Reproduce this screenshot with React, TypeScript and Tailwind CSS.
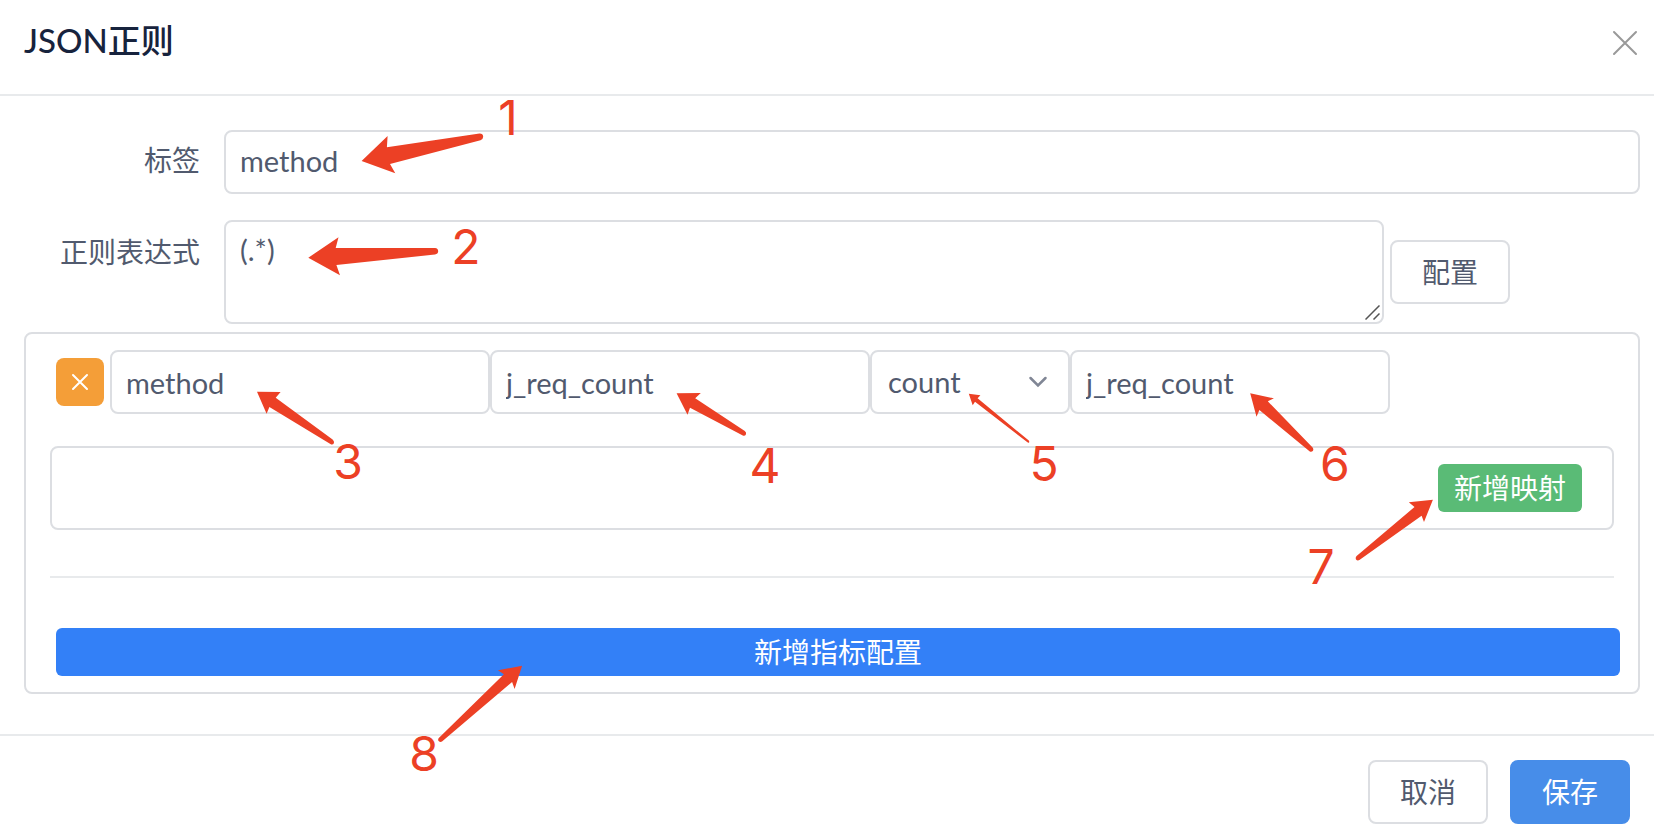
import type { InputHTMLAttributes } from "react";

const field =
  "h-16 w-full min-w-0 rounded-lg border-2 border-[#dcdee2] bg-white px-3.5 text-[29px] text-[#515a6e] outline-none";

const plainButton =
  "flex h-16 w-30 shrink-0 items-center justify-center rounded-lg border-2";

function TextField({ className = "", ...rest }: InputHTMLAttributes<HTMLInputElement>) {
  return <input type="text" className={`${field} ${className}`} {...rest} />;
}

const arrows = [
  "M361.6 161L387.6 136L386.9 147.3L479.5 133.4Q483 133.3 483.2 136.7Q483 139.6 480.5 140.2L390 164L395.3 173.3Z",
  "M308.3 257.7L338.5 237.3L335.7 248L435 248Q438.2 248.3 438.2 251.3Q438 254.2 435 254.4L336.4 265L340 275.3Z",
  "M257 391.7L280.6 392L275.7 397.7L332.6 439.6Q334.4 441.4 334 443Q333 445 331.2 444.5L269.4 407L266.6 413.7Z",
  "M676.6 393.3L700.8 393L695.2 398.3L744.8 431Q746.6 432.6 746 434.3Q745 436.4 742.8 435.6L690 407.7L687.5 414.7Z",
  "M968.8 393.7L980.4 395.3L977.6 398.3L1028.8 440.6Q1029.6 441.8 1029 442.7Q1028.2 443 1027.4 442.3L975 401.7L972.7 405.3Z",
  "M1250.2 393.3L1273.9 398.3L1267.8 401.3L1312.6 447.6Q1313.8 449.4 1313 450.8Q1311.6 452.4 1309.8 451.6L1259.4 410L1256.5 416.7Z",
  "M1432.9 499.7L1408.8 502.3L1414.5 507L1356.6 556Q1355.2 557.6 1356 559.4Q1357.4 561 1359.4 560L1421.6 515.7L1424 522Z",
  "M522.1 665.7L497.9 670.3L503.9 674.3L438.8 738Q437.6 739.6 438.6 741Q440.2 742.6 442 741.6L512.1 682L514.6 689Z",
];

const steps = [
  { n: 1, x: 508, y: 135 },
  { n: 2, x: 466, y: 264 },
  { n: 3, x: 348, y: 479 },
  { n: 4, x: 765, y: 483 },
  { n: 5, x: 1044, y: 481 },
  { n: 6, x: 1335, y: 481 },
  { n: 7, x: 1321, y: 584 },
  { n: 8, x: 424, y: 771 },
];

function Annotations() {
  return (
    <svg
      className="pointer-events-none absolute top-0 left-0 fill-[#ec4025]"
      width="1654"
      height="826"
      viewBox="0 0 1654 826"
    >
      {arrows.map((d) => (
        <path key={d} d={d} />
      ))}
      {steps.map((s) => (
        <text key={s.n} x={s.x} y={s.y} textAnchor="middle" className="font-['Inter',sans-serif] text-[48px] font-normal">
          {s.n}
        </text>
      ))}
    </svg>
  );
}

export default function App() {
  return (
    <div className="relative overflow-hidden bg-white font-['Lato','Noto_Sans_CJK_SC',sans-serif] text-[28px] leading-10 font-normal text-[#515a6e]">
      <header className="flex h-24 items-center justify-between border-b-2 border-[#e8eaec] pr-4 pb-2 pl-6">
        <h1 className="pb-1.5 text-[33px] font-medium text-[#17233d]">JSON正则</h1>
        <button type="button" aria-label="关闭" className="text-[#999999]">
          <svg width="26" height="26" viewBox="0 0 26 26" fill="none" stroke="currentColor" strokeWidth="2" strokeLinecap="round">
            <path d="M2 2L24 24M24 2L2 24" />
          </svg>
        </button>
      </header>

      <main className="border-b-2 border-[#e8eaec] pt-[34px] pr-3.5 pb-10 pl-6">
        <div className="flex">
          <label htmlFor="tag" className="w-50 shrink-0 pt-2.5 pr-6 text-right">
            标签
          </label>
          <TextField id="tag" defaultValue="method" className="flex-1 pb-1" />
        </div>

        <div className="mt-6.5 flex">
          <label htmlFor="pattern" className="w-50 shrink-0 pt-3 pr-6 text-right">
            正则表达式
          </label>
          <div className="relative h-26 flex-1">
            <textarea
              id="pattern"
              defaultValue="(.*)"
              className="block h-full w-full resize-none rounded-lg border-2 border-[#dcdee2] px-3.5 py-2 text-[29px] outline-none"
            />
            <svg
              className="absolute right-1 bottom-1"
              width="15"
              height="15"
              viewBox="0 0 15 15"
              fill="none"
              stroke="#555555"
              strokeWidth="1.5"
            >
              <path d="M0.5 14.5L14.5 0.5M8.5 14.5L14.5 8.5" />
            </svg>
          </div>
          <button type="button" className={`${plainButton} mt-5 mr-32.5 ml-1.5 border-[#dcdee2]`}>
            配置
          </button>
        </div>

        <section className="mt-2 rounded-lg border-2 border-[#dcdee2] px-6 py-4">
          <div className="flex items-center pr-56 pl-1.5">
            <button
              type="button"
              aria-label="删除"
              className="mr-1.5 flex size-12 shrink-0 items-center justify-center rounded-lg bg-[#f49e38] text-white"
            >
              <svg width="18" height="18" viewBox="0 0 18 18" fill="none" stroke="currentColor" strokeWidth="2" strokeLinecap="round">
                <path d="M2 2L16 16M16 2L2 16" />
              </svg>
            </button>
            <div className="grid min-w-0 flex-1 grid-cols-[19fr_19fr_10fr_16fr]">
              <TextField aria-label="标签名" defaultValue="method" />
              <TextField aria-label="指标名" defaultValue="j_req_count" />
              <div className="relative min-w-0">
                <select aria-label="聚合方式" className={`${field} appearance-none pl-4`}>
                  <option>count</option>
                </select>
                <svg
                  className="pointer-events-none absolute top-6.5 right-5.5"
                  width="20"
                  height="12"
                  viewBox="0 0 20 12"
                  fill="none"
                  stroke="#808695"
                  strokeWidth="2.5"
                  strokeLinecap="round"
                >
                  <path d="M2.5 2L10 9.5L17.5 2" />
                </svg>
              </div>
              <TextField aria-label="映射名" defaultValue="j_req_count" />
            </div>
          </div>

          <div className="mt-8 flex justify-end rounded-lg border-2 border-[#dcdee2] py-4 pr-7.5">
            <button type="button" className="flex h-12 w-36 items-center justify-center rounded-md bg-[#5abb76] text-white">
              新增映射
            </button>
          </div>

          <hr className="mt-11.5 border-t-2 border-[#e8eaec]" />

          <button
            type="button"
            className="relative left-1.5 mt-12.5 flex h-12 w-full items-center justify-center rounded-md bg-[#3380f7] text-white"
          >
            新增指标配置
          </button>
        </section>
      </main>

      <footer className="flex justify-end gap-5.5 pt-6 pr-6 pb-0.5">
        <button type="button" className={`${plainButton} border-[#dcdee2]`}>
          取消
        </button>
        <button type="button" className={`${plainButton} border-[#478de9] bg-[#478de9] text-white`}>
          保存
        </button>
      </footer>

      <Annotations />
    </div>
  );
}
